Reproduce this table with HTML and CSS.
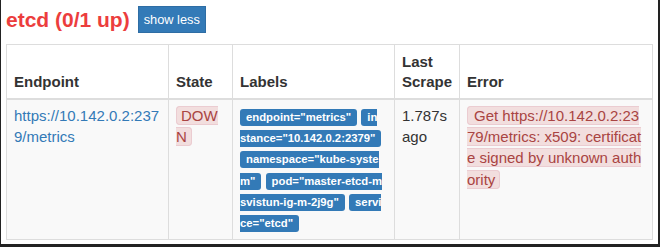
FILE: index.html
```html
<!DOCTYPE html>
<html>
<head>
<meta charset="utf-8">
<link rel="stylesheet" href="styles.css">
</head>
<body>
<div class="frame">
  <div class="head">
    <h2 class="title">etcd (0/1 up)</h2>
    <button class="btn">show less</button>
  </div>
  <table class="targets">
    <colgroup>
      <col class="c-endpoint">
      <col class="c-state">
      <col class="c-labels">
      <col class="c-scrape">
      <col class="c-error">
    </colgroup>
    <thead>
      <tr>
        <th>Endpoint</th>
        <th>State</th>
        <th>Labels</th>
        <th>Last Scrape</th>
        <th>Error</th>
      </tr>
    </thead>
    <tbody>
      <tr>
        <td><a class="link" href="#">https://10.142.0.2:2379/metrics</a></td>
        <td><span class="alert">DOWN</span></td>
        <td class="labels"><span class="label">endpoint="metrics"</span> <span class="label">instance="10.142.0.2:2379"</span> <span class="label">namespace="kube-system"</span> <span class="label">pod="master-etcd-msvistun-ig-m-2j9g"</span> <span class="label">service="etcd"</span></td>
        <td>1.787s ago</td>
        <td><span class="alert alert-error">Get https://10.142.0.2:2379/metrics: x509: certificate signed by unknown authority</span></td>
      </tr>
    </tbody>
  </table>
</div>
</body>
</html>
```

FILE: styles.css
```css
html, body {
  margin: 0;
  padding: 0;
  background: #fff;
}
body {
  font-family: "Liberation Sans", Arial, sans-serif;
  color: #333;
  font-size: 15px;
}
.frame {
  width: 660px;
  height: 247px;
  box-sizing: border-box;
  border-left: 1px solid #222;
  border-right: 2px solid #222;
  border-bottom: 3px solid #222;
  padding: 0 6px 0 5px;
  overflow: hidden;
}
.head {
  display: flex;
  align-items: flex-start;
  gap: 8px;
  padding-top: 6px;
  height: 38px;
}
.title {
  margin: 0;
  font-size: 21px;
  line-height: 28px;
  font-weight: bold;
  color: #ec3d3d;
}
.btn {
  font-family: "Liberation Sans", Arial, sans-serif;
  font-size: 12.8px;
  color: #fff;
  background: #337ab7;
  border: 1px solid #2e6da4;
  border-radius: 0;
  padding: 0 5px;
  height: 27px;
  line-height: 25px;
  margin: 0;
}
.targets {
  width: 646px;
  table-layout: fixed;
  border-collapse: collapse;
  border: 1px solid #ddd;
}
.c-endpoint { width: 162px; }
.c-state { width: 64px; }
.c-labels { width: 162px; }
.c-scrape { width: 65px; }
.c-error { width: 193px; }
.targets th {
  text-align: left;
  vertical-align: bottom;
  font-weight: bold;
  line-height: 20px;
  padding: 7px 7px 6px;
  border: 1px solid #ddd;
  border-bottom: 2px solid #ddd;
  background: #fff;
}
.targets td {
  vertical-align: top;
  line-height: 21.2px;
  padding: 5px 7px 7px;
  border: 1px solid #ddd;
  background: #f9f9f9;
  word-break: break-all;
}
.link {
  color: #337ab7;
  text-decoration: none;
}
.alert {
  background: #f2dede;
  color: #a94442;
  border: 1px solid #ebccd1;
  border-radius: 4px;
  padding: 0 4px;
  -webkit-box-decoration-break: slice;
  box-decoration-break: slice;
}
.alert-error {
  padding-left: 6px;
}
.targets td.labels {
  font-size: 15px;
  padding-right: 11px;
}
.label {
  background: #337ab7;
  color: #fff;
  font-weight: bold;
  font-size: 11.3px;
  line-height: 1;
  padding: 2px 6px 3px;
  border-radius: 3px;
}
```
